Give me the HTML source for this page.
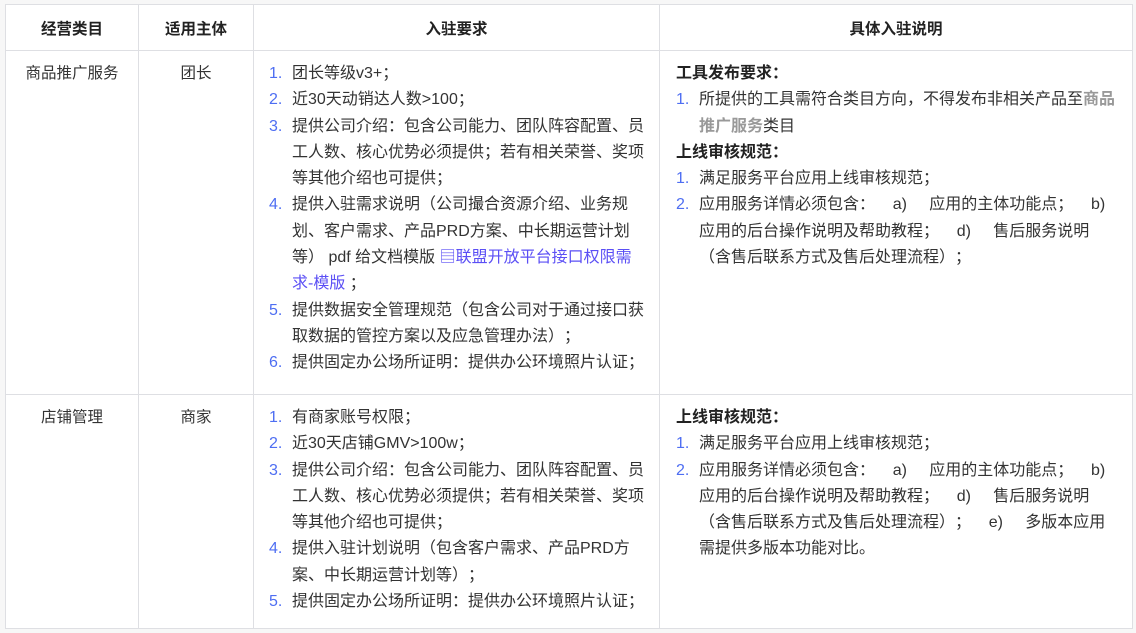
<!DOCTYPE html>
<html><head><meta charset="utf-8"><style>
body{margin:0;background:#f7f7f7;width:1136px;height:633px;overflow:hidden;font-family:"Liberation Sans","Noto Sans CJK SC",sans-serif;font-size:16px;color:#333;text-spacing-trim:space-all;}
table{position:absolute;left:5px;top:4px;border-collapse:collapse;background:#fff;table-layout:fixed;}
td,th{border:1px solid #dedfe3;vertical-align:top;padding:0;}
th{height:45px;font-weight:bold;text-align:center;vertical-align:middle;color:#222;font-size:15.5px;}
.c{text-align:center;padding-top:10px;line-height:26px;font-size:15.5px;}
.l{padding:10px 0 0 15px;line-height:26.3px;white-space:nowrap;}
.r{padding:10px 0 0 16px;line-height:26.3px;white-space:nowrap;}
.it{position:relative;padding-left:23px;}
.n{position:absolute;left:0;color:#4e6ef2;}
b{color:#222;}
.g{color:#999;font-weight:bold;}
.lk{color:#5b4ff5;}
</style></head><body>
<table>
<colgroup><col style="width:133px"><col style="width:115px"><col style="width:406px"><col style="width:473px"></colgroup>
<tr><th>经营类目</th><th>适用主体</th><th>入驻要求</th><th>具体入驻说明</th></tr>
<tr style="height:344px">
<td class="c">商品推广服务</td><td class="c">团长</td>
<td class="l">
<div class="it"><span class="n">1.</span>团长等级v3+；</div>
<div class="it"><span class="n">2.</span>近30天动销达人数&gt;100；</div>
<div class="it"><span class="n">3.</span>提供公司介绍：包含公司能力、团队阵容配置、员<br>工人数、核心优势必须提供；若有相关荣誉、奖项<br>等其他介绍也可提供；</div>
<div class="it"><span class="n">4.</span>提供入驻需求说明（公司撮合资源介绍、业务规<br>划、客户需求、产品PRD方案、中长期运营计划<br>等） pdf 给文档模版 <span class="lk">&#9636;联盟开放平台接口权限需<br>求-模版</span> ；</div>
<div class="it"><span class="n">5.</span>提供数据安全管理规范（包含公司对于通过接口获<br>取数据的管控方案以及应急管理办法）；</div>
<div class="it"><span class="n">6.</span>提供固定办公场所证明：提供办公环境照片认证；</div>
</td>
<td class="r">
<b>工具发布要求：</b>
<div class="it"><span class="n">1.</span>所提供的工具需符合类目方向，不得发布非相关产品至<span class="g">商品<br>推广服务</span>类目</div>
<b>上线审核规范：</b>
<div class="it"><span class="n">1.</span>满足服务平台应用上线审核规范；</div>
<div class="it"><span class="n">2.</span>应用服务详情必须包含：&nbsp;&nbsp;&nbsp; a)&nbsp;&nbsp;&nbsp;&nbsp; 应用的主体功能点；&nbsp;&nbsp;&nbsp; b)<br>应用的后台操作说明及帮助教程；&nbsp;&nbsp;&nbsp; d)&nbsp;&nbsp;&nbsp;&nbsp; 售后服务说明<br>（含售后联系方式及售后处理流程）；</div>
</td></tr>
<tr style="height:234px">
<td class="c">店铺管理</td><td class="c">商家</td>
<td class="l">
<div class="it"><span class="n">1.</span>有商家账号权限；</div>
<div class="it"><span class="n">2.</span>近30天店铺GMV&gt;100w；</div>
<div class="it"><span class="n">3.</span>提供公司介绍：包含公司能力、团队阵容配置、员<br>工人数、核心优势必须提供；若有相关荣誉、奖项<br>等其他介绍也可提供；</div>
<div class="it"><span class="n">4.</span>提供入驻计划说明（包含客户需求、产品PRD方<br>案、中长期运营计划等）；</div>
<div class="it"><span class="n">5.</span>提供固定办公场所证明：提供办公环境照片认证；</div>
</td>
<td class="r">
<b>上线审核规范：</b>
<div class="it"><span class="n">1.</span>满足服务平台应用上线审核规范；</div>
<div class="it"><span class="n">2.</span>应用服务详情必须包含：&nbsp;&nbsp;&nbsp; a)&nbsp;&nbsp;&nbsp;&nbsp; 应用的主体功能点；&nbsp;&nbsp;&nbsp; b)<br>应用的后台操作说明及帮助教程；&nbsp;&nbsp;&nbsp; d)&nbsp;&nbsp;&nbsp;&nbsp; 售后服务说明<br>（含售后联系方式及售后处理流程）；&nbsp;&nbsp;&nbsp; e)&nbsp;&nbsp;&nbsp;&nbsp; 多版本应用<br>需提供多版本功能对比。</div>
</td></tr>
</table>
</body></html>
